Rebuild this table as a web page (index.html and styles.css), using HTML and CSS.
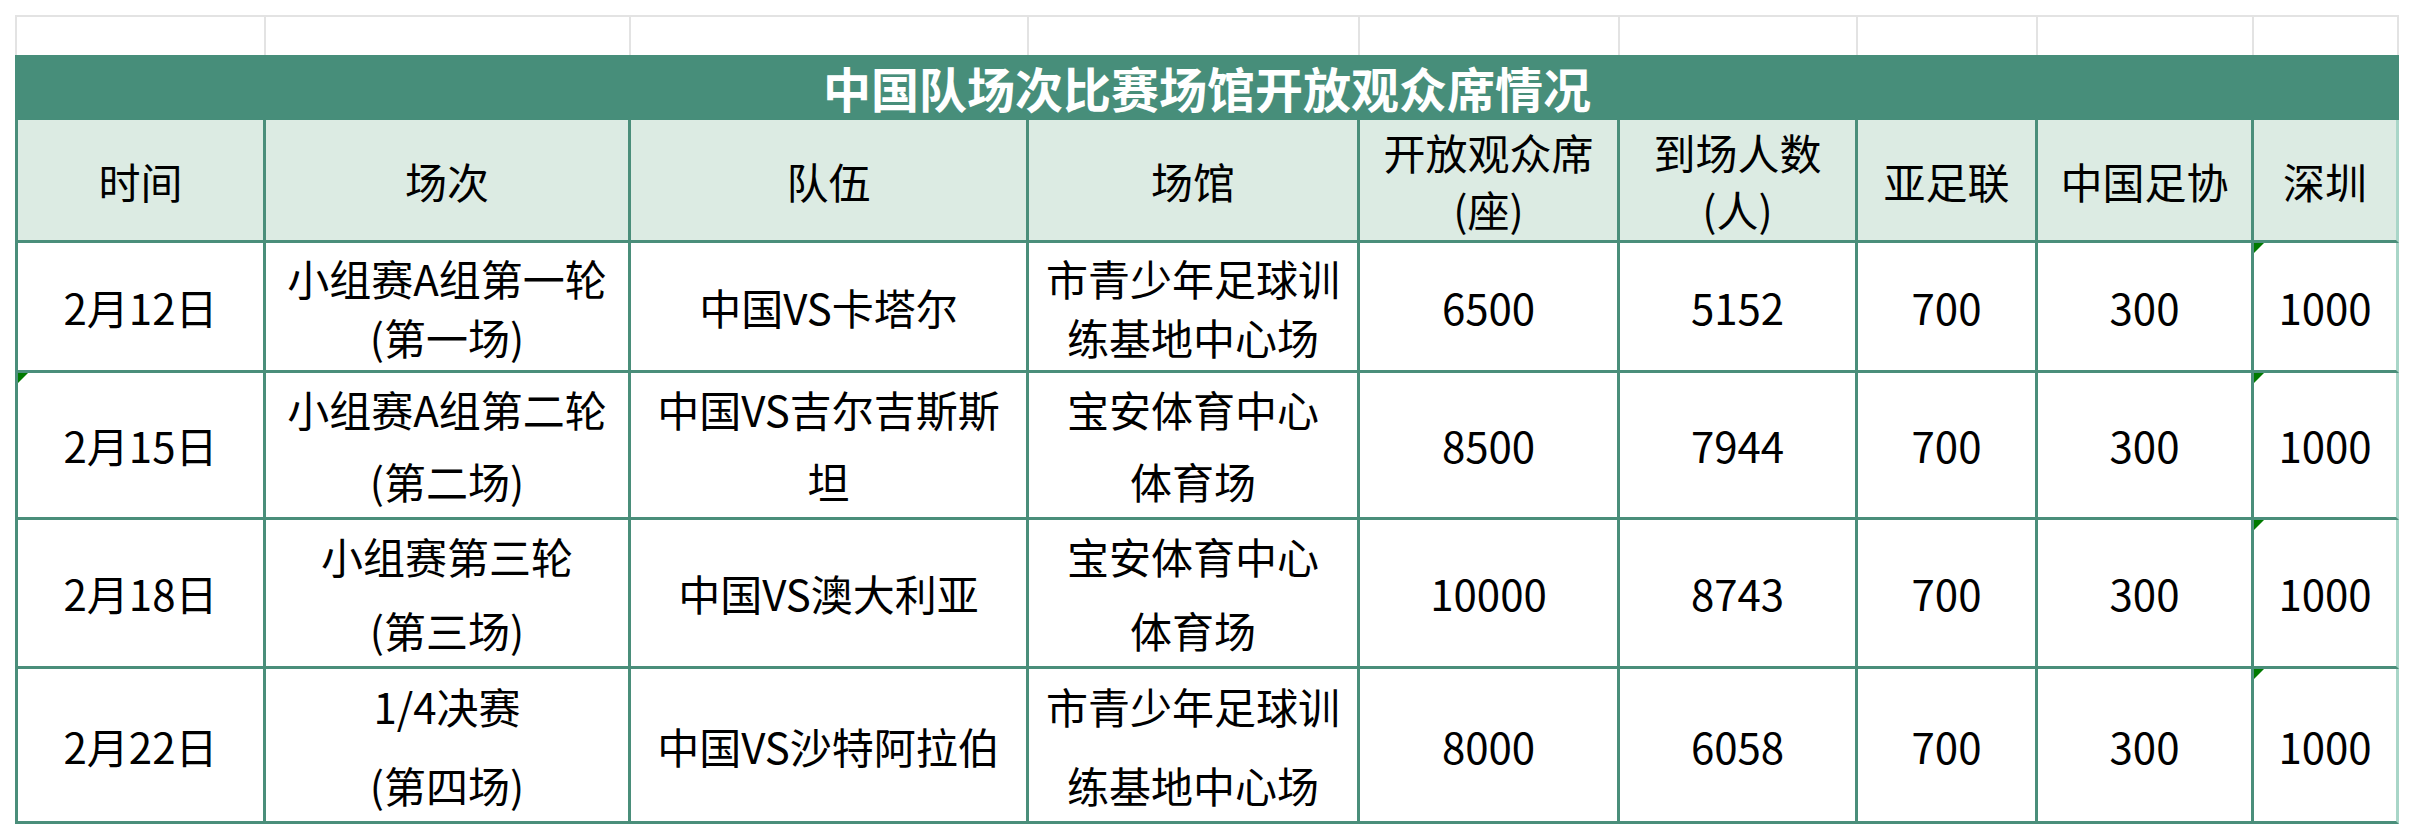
FILE: index.html
```html
<!DOCTYPE html>
<html lang="zh-CN">
<head>
<meta charset="utf-8">
<title>中国队场次比赛场馆开放观众席情况</title>
<link rel="stylesheet" href="styles.css">
</head>
<body>
<div class="sheet">
  <div class="grid first"></div><div class="grid"></div><div class="grid"></div><div class="grid"></div><div class="grid"></div><div class="grid"></div><div class="grid"></div><div class="grid"></div><div class="grid"></div>

  <div class="title">中国队场次比赛场馆开放观众席情况</div>

  <div class="cell head first">时间</div>
  <div class="cell head">场次</div>
  <div class="cell head">队伍</div>
  <div class="cell head">场馆</div>
  <div class="cell head">开放观众席<br>(座)</div>
  <div class="cell head">到场人数<br>(人)</div>
  <div class="cell head">亚足联</div>
  <div class="cell head">中国足协</div>
  <div class="cell head last">深圳</div>

  <div class="cell r1 first">2月12日</div>
  <div class="cell r1">小组赛A组第一轮<br>(第一场)</div>
  <div class="cell r1">中国VS卡塔尔</div>
  <div class="cell r1">市青少年足球训<br>练基地中心场</div>
  <div class="cell r1">6500</div>
  <div class="cell r1">5152</div>
  <div class="cell r1">700</div>
  <div class="cell r1">300</div>
  <div class="cell r1 last flag">1000</div>

  <div class="cell r2 first flag">2月15日</div>
  <div class="cell r2">小组赛A组第二轮<br>(第二场)</div>
  <div class="cell r2">中国VS吉尔吉斯斯<br>坦</div>
  <div class="cell r2">宝安体育中心<br>体育场</div>
  <div class="cell r2">8500</div>
  <div class="cell r2">7944</div>
  <div class="cell r2">700</div>
  <div class="cell r2">300</div>
  <div class="cell r2 last flag">1000</div>

  <div class="cell r3 first">2月18日</div>
  <div class="cell r3">小组赛第三轮<br>(第三场)</div>
  <div class="cell r3">中国VS澳大利亚</div>
  <div class="cell r3">宝安体育中心<br>体育场</div>
  <div class="cell r3">10000</div>
  <div class="cell r3">8743</div>
  <div class="cell r3">700</div>
  <div class="cell r3">300</div>
  <div class="cell r3 last flag">1000</div>

  <div class="cell r4 first">2月22日</div>
  <div class="cell r4">1/4决赛<br>(第四场)</div>
  <div class="cell r4">中国VS沙特阿拉伯</div>
  <div class="cell r4">市青少年足球训<br>练基地中心场</div>
  <div class="cell r4">8000</div>
  <div class="cell r4">6058</div>
  <div class="cell r4">700</div>
  <div class="cell r4">300</div>
  <div class="cell r4 last flag">1000</div>
</div>
</body>
</html>
```

FILE: styles.css
```css
html, body {
  margin: 0;
  padding: 0;
  background: #ffffff;
}

body {
  font-family: "Noto Sans CJK SC", "Noto Sans", sans-serif;
  color: #000000;
}

.sheet {
  display: grid;
  grid-template-columns: 251px 365px 398px 331px 260px 238px 180px 216px 145px;
  grid-template-rows: 40px 65px 123px 130px 147px 149px 155px;
  margin: 15px 0 0 15px;
  width: 2384px;
}

.grid {
  box-sizing: border-box;
  border-top: 2px solid #e3e3e3;
  border-right: 2px solid #e3e3e3;
}

.grid.first {
  border-left: 2px solid #e3e3e3;
}

.title {
  grid-column: 1 / -1;
  background: #478e7a;
  color: #ffffff;
  font-weight: 700;
  font-size: 48px;
  line-height: 65px;
  text-align: center;
  white-space: nowrap;
}

.cell {
  position: relative;
  box-sizing: border-box;
  display: flex;
  align-items: center;
  justify-content: center;
  text-align: center;
  white-space: nowrap;
  font-size: 42px;
  border-right: 3px solid #4a8e7a;
  border-bottom: 3px solid #4a8e7a;
  background: #ffffff;
}

.cell.first {
  border-left: 3px solid #4a8e7a;
}

.cell.last {
  border-right-color: #a9d6c8;
}

.head {
  background: #dcebe3;
  line-height: 57px;
}

.r1 { line-height: 59px; }
.r2 { line-height: 72px; }
.r3 { line-height: 74px; }
.r4 { line-height: 79px; }

.flag::before {
  content: "";
  position: absolute;
  top: 0;
  left: 0;
  width: 10px;
  height: 10px;
  background: #007a00;
  clip-path: polygon(0 0, 100% 0, 0 100%);
}
```
